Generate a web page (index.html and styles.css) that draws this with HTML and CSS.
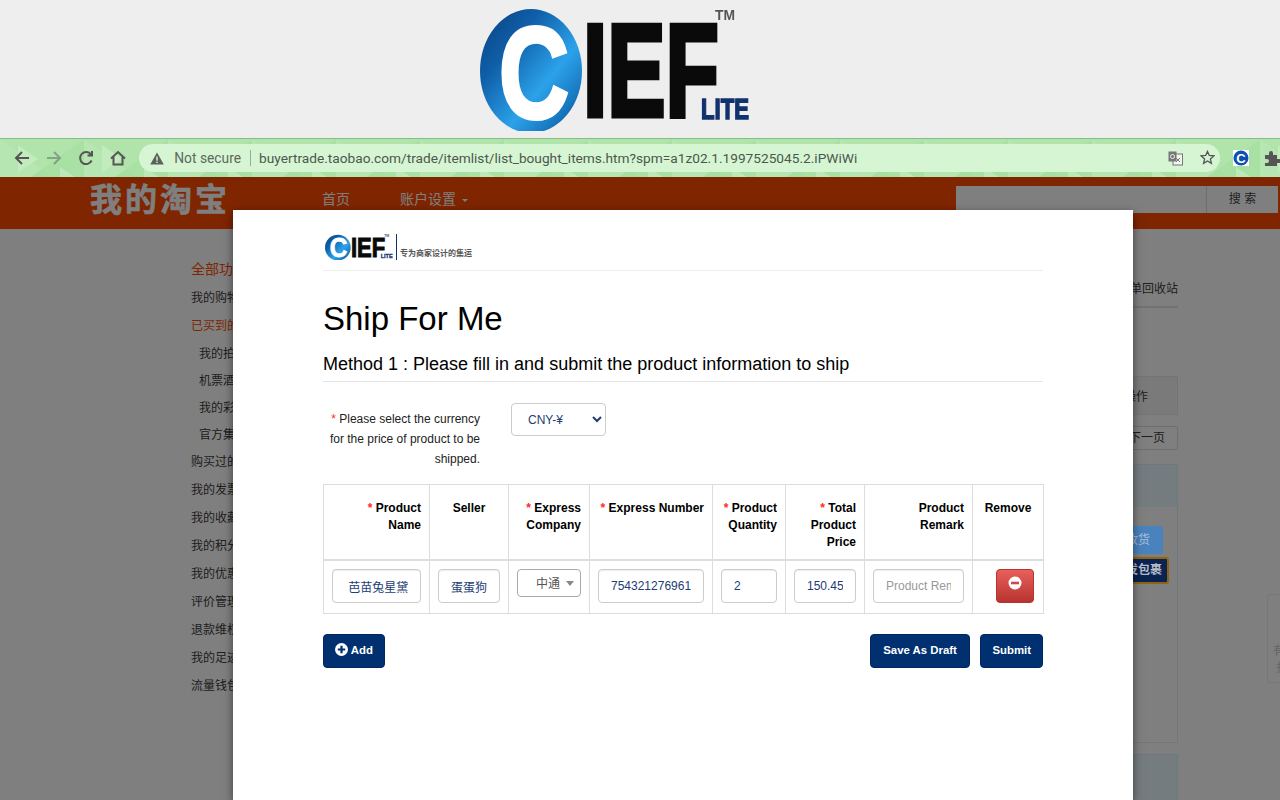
FILE: index.html
```html
<!DOCTYPE html>
<html lang="en">
<head>
    <meta charset="UTF-8">
    <meta name="viewport" content="width=device-width, initial-scale=1.0">
    <title>Ship For Me</title>
    <link rel="stylesheet" href="styles.css">
</head>
<body>
    <svg class="defs" width="0" height="0">
        <defs>
            <linearGradient id="ringBlue" x1="0" y1="0" x2="1" y2="1">
                <stop offset="0" stop-color="#0a3f7e"/>
                <stop offset="0.3" stop-color="#0f5fa8"/>
                <stop offset="0.62" stop-color="#2ba2ea"/>
                <stop offset="0.85" stop-color="#1470b8"/>
                <stop offset="1" stop-color="#0d4d8e"/>
            </linearGradient>
            <symbol id="cief" viewBox="0 0 270 130" preserveAspectRatio="none">
                <ellipse cx="51" cy="70" rx="51" ry="62" fill="url(#ringBlue)"/>
                <text class="logo-c" x="19" y="117" textLength="70" lengthAdjust="spacingAndGlyphs">C</text>
                <text class="logo-ief" x="103" y="115" textLength="136" lengthAdjust="spacingAndGlyphs">IEF</text>
                <text class="logo-lite" x="221" y="118" textLength="48" lengthAdjust="spacingAndGlyphs">LITE</text>
                <text class="logo-tm" x="235" y="19" textLength="20" lengthAdjust="spacingAndGlyphs">TM</text>
            </symbol>
            <pattern id="tris" width="84" height="60" patternUnits="userSpaceOnUse">
                <polygon points="0,0 42,30 0,60" fill="#b6e6b2"/>
                <polygon points="42,30 84,0 84,60" fill="#a9e0a4"/>
                <polygon points="0,0 84,0 42,30" fill="#b0e4ab"/>
                <polygon points="0,60 84,60 42,30" fill="#a6dfa1"/>
                <polygon points="18,6 38,20 18,34" fill="#c2ebbe"/>
                <polygon points="60,28 78,40 60,52" fill="#bce9b8"/>
            </pattern>
        </defs>
    </svg>

    <div class="banner">
        <svg class="banner-logo" width="270" height="130"><use href="#cief"/></svg>
    </div>

    <div class="toolbar">
        <svg class="toolbar-bg" width="1280" height="39"><rect width="1280" height="39" fill="url(#tris)"/></svg>
        <div class="nav-icons">
            <svg width="18" height="18" viewBox="0 0 18 18"><path class="ico" d="M16 9H3.500M9 3 3 9l6 6"/></svg>
            <svg class="off" width="18" height="18" viewBox="0 0 18 18"><path class="ico" d="M2 9h12.500M9 3l6 6-6 6"/></svg>
            <svg width="18" height="18" viewBox="0 0 18 18"><path class="ico" d="M14.600 11.500A6 6 0 1 1 14 5.600M15 2v4.500h-4.500"/></svg>
            <svg width="18" height="18" viewBox="0 0 18 18"><path class="ico" d="M2 9.500 9 3l7 6.500M4.500 8v7.500h9V8"/></svg>
        </div>
        <div class="omnibox">
            <svg width="14" height="13" viewBox="0 0 14 13"><path d="M7 0.500 13.800 12.500H0.200Z" fill="#5a625a"/><rect x="6.300" y="4.500" width="1.400" height="4.200" fill="#d5f5d3"/><rect x="6.300" y="9.600" width="1.400" height="1.400" fill="#d5f5d3"/></svg>
            <span class="secure">Not secure</span>
            <span class="url">buyertrade.taobao.com/trade/itemlist/list_bought_items.htm?spm=a1z02.1.1997525045.2.iPWiWi</span>
            <svg class="translate" width="15" height="15" viewBox="0 0 15 15"><rect x="5" y="3" width="9.500" height="11" fill="#eef6ee" stroke="#777"/><rect x="0.500" y="0.500" width="8" height="10" fill="#777"/><circle cx="4.500" cy="5.500" r="2" fill="none" stroke="#eee"/><path d="M8 7l4 4M12 7l-4 4" stroke="#777"/></svg>
            <svg class="star" width="15" height="15" viewBox="0 0 15 15"><path d="M7.500 1.400 9.300 5.500l4.500.4-3.400 3 1 4.400-3.900-2.300-3.900 2.300 1-4.400-3.400-3 4.500-.4Z" fill="none" stroke="#555" stroke-width="1.300"/></svg>
        </div>
        <div class="ext-icons">
            <svg width="16" height="16" viewBox="0 0 16 16"><rect width="16" height="16" fill="#fff"/><circle cx="8" cy="8" r="7.500" fill="#0f4fb0"/><text class="ext-c" x="8" y="12.600">C</text></svg>
            <svg class="puzzle" width="16" height="16" viewBox="0 0 16 16"><path d="M1 5h4V3a2 2 0 0 1 4 0v2h4v4h2a2 2 0 0 1 0 4h-2v3H1v-3h2a2 2 0 0 0 0-4H1Z" fill="#555"/></svg>
        </div>
    </div>

    <div class="page">
        <div class="tb-header">
            <div class="tb-logo">我的淘宝</div>
            <a class="tb-nav first">首页</a>
            <a class="tb-nav">账户设置<i class="tb-caret"></i></a>
            <div class="tb-search">
                <div class="tb-input"></div>
                <div class="tb-btn">搜 索</div>
            </div>
        </div>

        <div class="tb-body">
            <ul class="side">
                <li class="side-top red">全部功能</li>
                <li>我的购物车</li>
                <li class="red">已买到的宝贝</li>
                <li class="sub">我的拍卖</li>
                <li class="sub">机票酒店</li>
                <li class="sub">我的彩票</li>
                <li class="sub">官方集运</li>
                <li class="short">购买过的店铺</li>
                <li>我的发票</li>
                <li>我的收藏</li>
                <li>我的积分</li>
                <li>我的优惠</li>
                <li>评价管理</li>
                <li>退款维权</li>
                <li>我的足迹</li>
                <li>流量钱包</li>
            </ul>
            <div class="main">
                <div class="tabs">订单回收站</div>
                <div class="list-head">操作</div>
                <div class="pager"><span>下一页</span></div>
                <div class="order">
                    <div class="order-head"></div>
                    <div class="order-body">
                        <div class="btn-pay">确认收货</div>
                        <div class="btn-ship">代发包裹</div>
                    </div>
                </div>
                <div class="order-head next"></div>
            </div>
        </div>

        <div class="float-box">有<br>&nbsp;扫</div>
        <div class="overlay"></div>

        <div class="modal">
            <div class="modal-top">
                <svg class="modal-logo" width="68" height="27"><use href="#cief"/></svg>
                <span class="modal-bar"></span>
                <span class="modal-slogan">专为商家设计的集运</span>
            </div>
            <h1>Ship For Me</h1>
            <h3>Method 1 : Please fill in and submit the product information to ship</h3>

            <div class="currency">
                <label><b>*</b> Please select the currency for the price of product to be shipped.</label>
                <select class="cur-select">
                    <option>CNY-¥</option>
                </select>
            </div>

            <table class="goods">
                <colgroup>
                    <col class="c-name"><col class="c-seller"><col class="c-company"><col class="c-number">
                    <col class="c-qty"><col class="c-price"><col class="c-remark"><col class="c-remove">
                </colgroup>
                <thead>
                    <tr>
                        <th><b>*</b> Product Name</th>
                        <th class="mid">Seller</th>
                        <th><b>*</b> Express Company</th>
                        <th><b>*</b> Express Number</th>
                        <th><b>*</b> Product Quantity</th>
                        <th><b>*</b> Total Product Price</th>
                        <th>Product Remark</th>
                        <th class="mid">Remove</th>
                    </tr>
                </thead>
                <tbody>
                    <tr>
                        <td><input class="field" value=" 芭苗兔星黛"></td>
                        <td><input class="field" value="蛋蛋狗"></td>
                        <td><div class="pick">中通<i class="pick-caret"></i></div></td>
                        <td><input class="field" value="754321276961"></td>
                        <td><input class="field" value="2"></td>
                        <td><input class="field" value="150.45"></td>
                        <td><input class="field" placeholder="Product Remark"></td>
                        <td class="end">
                            <button class="btn-remove">
                                <svg width="14" height="14" viewBox="0 0 14 14"><circle cx="7" cy="7" r="6.500" fill="#fff"/><rect x="3" y="5.700" width="8" height="2.600" fill="#cf4a46"/></svg>
                            </button>
                        </td>
                    </tr>
                </tbody>
            </table>

            <div class="actions">
                <button class="btn">
                    <svg width="13" height="13" viewBox="0 0 14 14"><circle cx="7" cy="7" r="7" fill="#fff"/><path d="M5.800 3h2.400v2.800H11v2.400H8.200V11H5.800V8.200H3V5.800h2.800Z" fill="#003070"/></svg>
                    Add
                </button>
                <div class="actions-right">
                    <button class="btn wide">Save As Draft</button>
                    <button class="btn">Submit</button>
                </div>
            </div>
        </div>
    </div>
</body>
</html>
```

FILE: styles.css
```css
* {
    box-sizing: border-box;
}
body {
    margin: 0;
    padding: 0;
    height: 800px;
    overflow: hidden;
    background-color: #fff;
    font-family: "Liberation Sans", "Noto Sans CJK SC", sans-serif;
}
.defs {
    position: absolute;
}

/* top banner */
.banner {
    height: 138px;
    background-color: #eeeeee;
    padding: 1px 0 0 480px;
}
.banner-logo {
    filter: blur(0.7px);
}
.logo-c {
    font: bold 130px "Liberation Sans", sans-serif;
    fill: #fff;
    stroke: #fff;
    stroke-width: 4px;
}
.logo-ief {
    font: bold 132px "Liberation Sans", sans-serif;
    fill: #0a0a0a;
    stroke: #0a0a0a;
    stroke-width: 5px;
}
.logo-lite {
    font: bold 29px "Liberation Sans", sans-serif;
    fill: #12326e;
    stroke: #12326e;
    stroke-width: 1.5px;
}
.logo-tm {
    font: bold 14px "Liberation Sans", sans-serif;
    fill: #555;
}

/* browser toolbar */
.toolbar {
    position: relative;
    height: 39px;
    border-top: 1px solid #86bd84;
    display: flex;
    align-items: center;
    background-color: #b0e4ab;
    overflow: hidden;
    padding: 0 0 0 13px;
}
.toolbar-bg {
    position: absolute;
    left: 0;
    top: 0;
}
.nav-icons {
    position: relative;
    display: flex;
    gap: 14px;
    width: 127px;
}
.off {
    opacity: 0.45;
}
.ico {
    fill: none;
    stroke: #555;
    stroke-width: 2;
}
.omnibox {
    position: relative;
    width: 1087px;
    height: 28px;
    border-radius: 14px;
    background-color: #d5f5d3;
    display: flex;
    align-items: center;
    padding-left: 11px;
    font: 14px Roboto, sans-serif;
    color: #4e574e;
}
.secure {
    margin-left: 10px;
    padding-right: 9px;
    border-right: 1px solid #99aa99;
    line-height: 16px;
    font-size: 13.800px;
    color: #606860;
}
.url {
    margin-left: 8px;
    font-size: 13.700px;
}
.translate {
    position: absolute;
    left: 1029px;
    top: 7px;
}
.star {
    position: absolute;
    left: 1061px;
    top: 6px;
}
.ext-icons {
    position: relative;
    display: flex;
    gap: 15px;
    margin-left: 13px;
}
.ext-c {
    font: bold 13px "Liberation Sans", sans-serif;
    fill: #fff;
    text-anchor: middle;
}

/* dimmed taobao page */
.page {
    position: relative;
    height: 623px;
    overflow: hidden;
    background-color: #fff;
}
.tb-header {
    height: 52px;
    background-color: #ff4a00;
    display: flex;
    align-items: center;
    padding-left: 90px;
    color: #fff;
}
.tb-logo {
    width: 137px;
    font-size: 32px;
    font-weight: bold;
    letter-spacing: 3px;
    -webkit-text-stroke: 0.6px #fff;
    white-space: nowrap;
    margin-top: -12px;
}
.tb-nav {
    font-size: 14px;
    margin-right: 50px;
    margin-top: -10px;
}
.tb-nav.first {
    margin-left: 95px;
}
.tb-caret {
    display: inline-block;
    margin-left: 6px;
    vertical-align: middle;
    border-top: 3px solid #fff;
    border-left: 3px solid transparent;
    border-right: 3px solid transparent;
}
.tb-search {
    display: flex;
    margin-left: auto;
    margin-right: 2px;
    margin-top: -8px;
    height: 27px;
    width: 322px;
    background-color: #fff;
}
.tb-input {
    flex: 1;
    border-right: 1px solid #ddd;
}
.tb-btn {
    width: 71px;
    text-align: center;
    font-size: 12px;
    line-height: 27px;
    color: #444;
}
.tb-body {
    display: flex;
    padding-left: 191px;
}
.side {
    list-style: none;
    margin: 0;
    padding: 27px 0 0;
    width: 129px;
    font-size: 12px;
    color: #3c3c3c;
}
.side li {
    height: 28px;
    line-height: 28px;
    white-space: nowrap;
}
.side .sub,
.side .short {
    height: 27px;
    line-height: 27px;
}
.side .sub {
    padding-left: 8px;
}
.side .red + .sub {
    margin-top: 1px;
}
.side .side-top {
    font-size: 14px;
    line-height: 26px;
}
.side .red {
    color: #ff4a00;
}
.main {
    width: 858px;
    font-size: 12px;
    color: #3c3c3c;
}
.tabs {
    margin-top: 50px;
    height: 29px;
    line-height: 20px;
    text-align: right;
    border-bottom: 2px solid #e5e5e5;
}
.list-head {
    margin-top: 68px;
    height: 39px;
    line-height: 40px;
    text-align: right;
    padding-right: 29px;
    background-color: #f5f5f5;
    border: 1px solid #e8e8e8;
}
.pager {
    margin-top: 11px;
    height: 24px;
    line-height: 22px;
    text-align: right;
    padding-right: 12px;
    border: 1px solid #ddd;
    border-radius: 3px;
}
.order {
    margin-top: 14px;
    height: 279px;
    border: 1px solid #daf3ff;
}
.order-head {
    height: 42px;
    background-color: #eaf8ff;
}
.order-head.next {
    margin-top: 11px;
    height: 60px;
    border: 1px solid #daf3ff;
}
.order-body {
    position: relative;
    z-index: 2;
    padding-top: 19px;
    display: flex;
    flex-direction: column;
    align-items: flex-end;
}
.btn-pay {
    width: 70px;
    height: 28px;
    margin-right: 14px;
    padding-right: 13px;
    line-height: 28px;
    text-align: right;
    white-space: nowrap;
    border-radius: 3px;
    background-color: #4a82bd;
    color: #a9c0d8;
}
.btn-ship {
    width: 80px;
    height: 27px;
    margin: 3px 8px 0 0;
    padding-right: 5px;
    line-height: 23px;
    text-align: right;
    white-space: nowrap;
    font-weight: bold;
    border: 2px solid #8f6410;
    border-radius: 3px;
    background-color: #0a2350;
    color: #b5bcc8;
}
.float-box {
    position: absolute;
    left: 1267px;
    top: 417px;
    width: 30px;
    height: 89px;
    padding: 48px 0 0 5px;
    font-size: 12px;
    line-height: 17px;
    color: #ccc;
    border: 1px solid #eee;
    border-radius: 3px;
}
.overlay {
    position: absolute;
    left: 0;
    top: 0;
    width: 100%;
    height: 100%;
    background-color: rgba(0, 0, 0, 0.5);
}

/* modal */
.modal {
    position: absolute;
    z-index: 3;
    left: 233px;
    top: 33px;
    width: 900px;
    height: 590px;
    padding: 0 90px;
    background-color: #fff;
    box-shadow: 0 3px 9px rgba(0, 0, 0, 0.5);
    color: #000;
}
.modal-top {
    display: flex;
    align-items: flex-end;
    height: 61px;
    padding: 22px 0 10px 2px;
    border-bottom: 1px solid #eee;
}
.modal-logo {
    flex: none;
}
.modal-bar {
    width: 1px;
    height: 26px;
    margin-left: 3px;
    background-color: #12326e;
}
.modal-slogan {
    margin: 0 0 1px 3px;
    font-size: 8px;
    line-height: 10px;
    font-weight: bold;
    color: #555;
}
h1 {
    margin: 29px 0 0;
    font-size: 33px;
    line-height: 38px;
    font-weight: normal;
}
h3 {
    margin: 16px 0 0;
    padding-bottom: 7px;
    font-size: 18px;
    line-height: 20px;
    font-weight: normal;
    border-bottom: 1px solid #e5e5e5;
}
.currency {
    display: flex;
    align-items: flex-start;
    margin-top: 21px;
}
.currency label {
    width: 157px;
    padding-top: 6px;
    font-size: 12px;
    line-height: 20px;
    text-align: right;
    color: #222;
}
b {
    color: #ff2a1a;
    font-weight: normal;
}
.cur-select {
    margin-left: 31px;
    width: 95px;
    height: 33px;
    padding-left: 12px;
    font: 12px "Liberation Sans", "Noto Sans CJK SC", sans-serif;
    color: #223d74;
    background-color: #fff;
    border: 1px solid #ccc;
    border-radius: 4px;
}
.goods {
    margin-top: 15px;
    width: 720px;
    table-layout: fixed;
    border-collapse: collapse;
    font-size: 12px;
}
.c-name { width: 106px; }
.c-seller { width: 79px; }
.c-company { width: 81px; }
.c-number { width: 123px; }
.c-qty { width: 73px; }
.c-price { width: 79px; }
.c-remark { width: 108px; }
.c-remove { width: 71px; }
.goods th,
.goods td {
    border: 1px solid #ddd;
    padding: 8px;
    vertical-align: top;
}
.goods th {
    height: 75px;
    padding-top: 15px;
    line-height: 17px;
    text-align: right;
    font-weight: bold;
    border-bottom-width: 2px;
}
.goods th b {
    font-weight: bold;
}
.goods th.mid {
    text-align: center;
}
.goods td {
    height: 53px;
}
.goods td.end {
    text-align: right;
}
.field {
    display: block;
    width: 100%;
    height: 34px;
    padding: 0 12px;
    font: 12px "Liberation Sans", "Noto Sans CJK SC", sans-serif;
    color: #223d74;
    background-color: #fff;
    border: 1px solid #ccc;
    border-radius: 4px;
    box-shadow: inset 0 1px 1px rgba(0, 0, 0, 0.075);
}
.field::placeholder {
    color: #999;
}
.pick {
    position: relative;
    height: 28px;
    line-height: 28px;
    padding-left: 18px;
    color: #555;
    border: 1px solid #aaa;
    border-radius: 4px;
}
.pick-caret {
    position: absolute;
    right: 6px;
    top: 11px;
    border-top: 5px solid #888;
    border-left: 4px solid transparent;
    border-right: 4px solid transparent;
}
.btn-remove {
    width: 38px;
    height: 34px;
    margin-right: 1px;
    padding: 0 0 4px;
    border: 1px solid #b8332f;
    border-radius: 4px;
    background: linear-gradient(#e8605c, #b8332f);
}
.actions {
    display: flex;
    justify-content: space-between;
    margin-top: 20px;
}
.actions-right {
    display: flex;
    gap: 10px;
}
.btn {
    height: 34px;
    padding: 0 11px 2px;
    font: bold 11.400px "Liberation Sans", sans-serif;
    color: #fff;
    background-color: #003070;
    border: 1px solid #002860;
    border-radius: 4px;
}
.btn.wide {
    padding: 0 12.500px 2px;
}
.btn svg {
    vertical-align: -2px;
}
```
